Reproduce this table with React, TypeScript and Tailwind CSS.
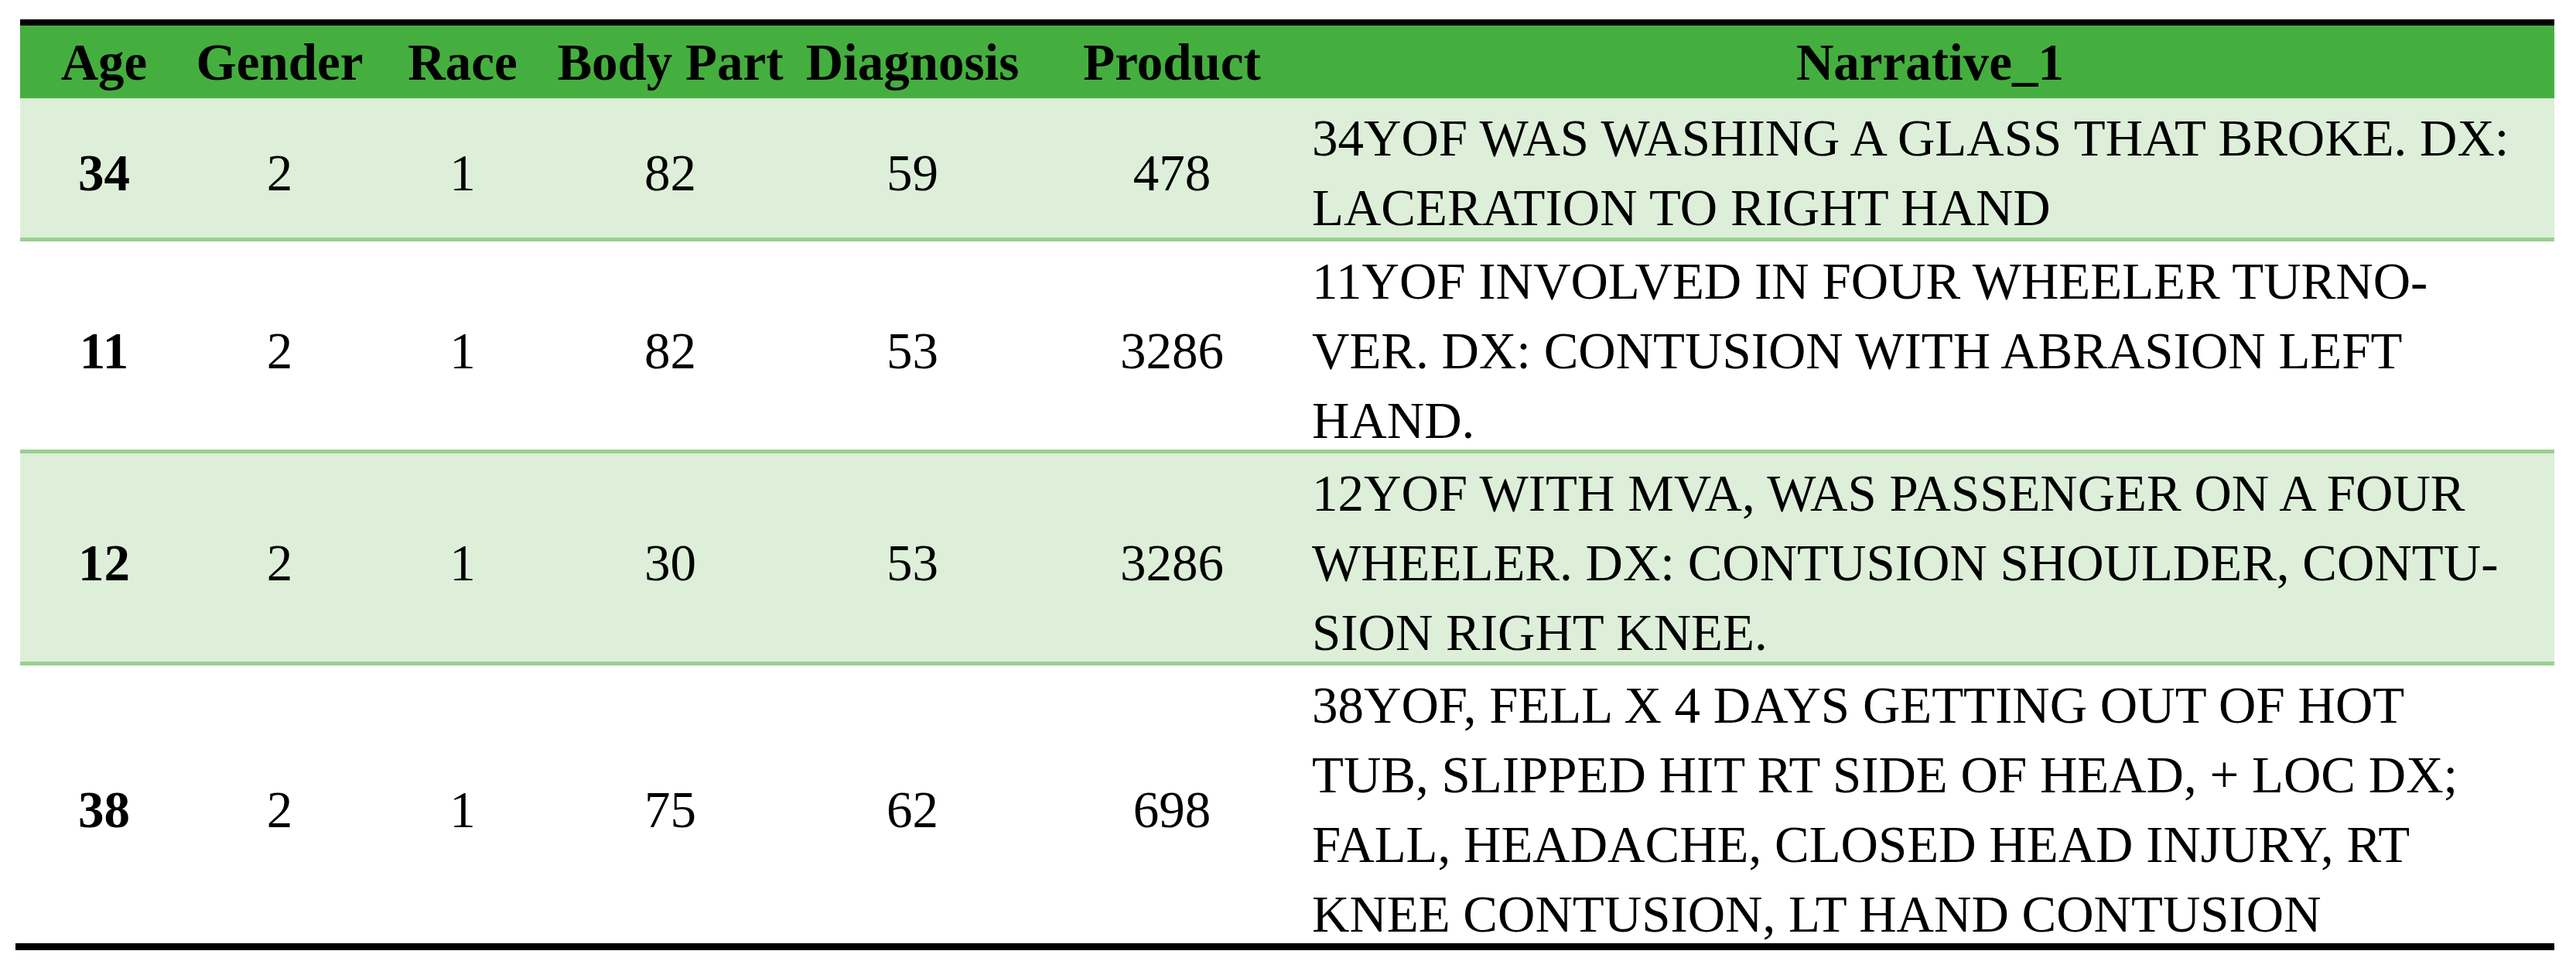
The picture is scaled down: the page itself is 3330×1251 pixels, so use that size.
const rows = [
  {
    age: "34", gender: "2", race: "1", body: "82", diag: "59", product: "478",
    lines: ["34YOF WAS WASHING A GLASS THAT BROKE. DX:", "LACERATION TO RIGHT HAND"],
    tint: true, height: "h-[185px]",
  },
  {
    age: "11", gender: "2", race: "1", body: "82", diag: "53", product: "3286",
    lines: ["11YOF INVOLVED IN FOUR WHEELER TURNO-", "VER. DX: CONTUSION WITH ABRASION LEFT", "HAND."],
    tint: false, height: "h-[274px]",
  },
  {
    age: "12", gender: "2", race: "1", body: "30", diag: "53", product: "3286",
    lines: ["12YOF WITH MVA, WAS PASSENGER ON A FOUR", "WHEELER. DX: CONTUSION SHOULDER, CONTU-", "SION RIGHT KNEE."],
    tint: true, height: "h-[274px]",
  },
  {
    age: "38", gender: "2", race: "1", body: "75", diag: "62", product: "698",
    lines: ["38YOF, FELL X 4 DAYS GETTING OUT OF HOT", "TUB, SLIPPED HIT RT SIDE OF HEAD, + LOC DX;", "FALL, HEADACHE, CLOSED HEAD INJURY, RT", "KNEE CONTUSION, LT HAND CONTUSION"],
    tint: false, height: "h-[359px]",
  },
];

const headers = ["Age", "Gender", "Race", "Body Part", "Diagnosis", "Product", "Narrative_1"];

const cols = "grid grid-cols-[217px_237px_236px_301px_325px_346px_1fr]";

export default function App() {
  return (
    <div className="min-h-[1251px] w-[3330px] bg-white pt-[25px] font-['Liberation_Serif',serif] text-[67px] leading-[90px] text-black">
      <div className="ml-[26px] w-[3276px]">
        {/* header */}
        <div className={`${cols} h-[102px] items-center border-t-[8px] border-black bg-[#44af3e] font-bold`}>
          {headers.map((h) => (
            <div key={h} className="whitespace-nowrap text-center">
              {h}
            </div>
          ))}
        </div>

        {rows.map((r, i) => (
          <div
            key={i}
            className={`${cols} ${r.height} items-center ${r.tint ? "bg-[#ddefd9]" : "bg-white"} ${i < rows.length - 1 ? "border-b-[5px] border-[#99d18e]" : ""}`}
          >
            <div className="pt-[6px] text-center font-bold">{r.age}</div>
            <div className="pt-[6px] text-center">{r.gender}</div>
            <div className="pt-[6px] text-center">{r.race}</div>
            <div className="pt-[6px] text-center">{r.body}</div>
            <div className="pt-[6px] text-center">{r.diag}</div>
            <div className="pt-[6px] text-center">{r.product}</div>
            <div className="pl-[8px] pt-[6px]">
              {r.lines.map((l) => (
                <div key={l} className="whitespace-nowrap">
                  {l}
                </div>
              ))}
            </div>
          </div>
        ))}

        <div className="-ml-[6px] h-[9px] w-[3282px] bg-black" />
      </div>
    </div>
  );
}
